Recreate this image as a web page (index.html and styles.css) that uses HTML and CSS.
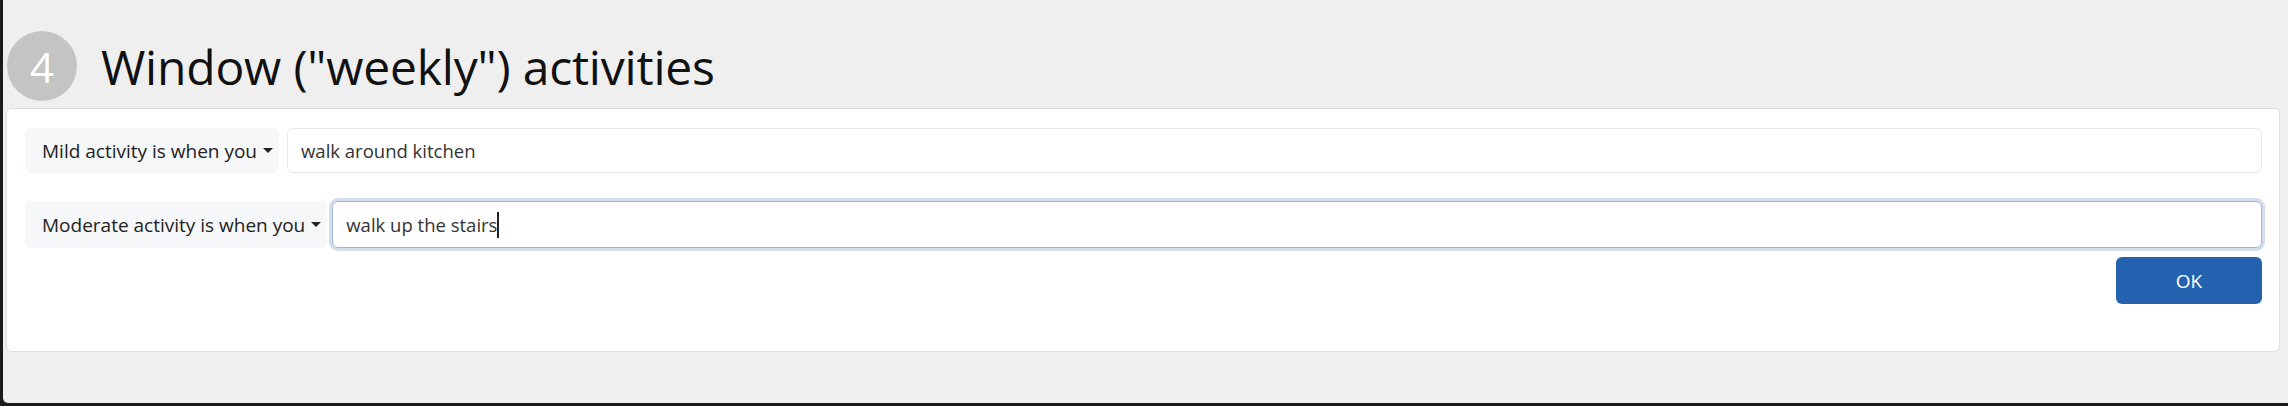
FILE: index.html
```html
<!DOCTYPE html>
<html lang="en">
<head>
<meta charset="utf-8">
<title>Window activities</title>
<link rel="stylesheet" href="styles.css">
</head>
<body>
<div class="page">
  <header class="heading">
    <div class="step">4</div>
    <h1 class="title">Window ("weekly") activities</h1>
  </header>
  <section class="card">
    <div class="row">
      <div class="label">Mild activity is when you <span class="caret"></span></div>
      <div class="field">walk around kitchen</div>
    </div>
    <div class="row row-focus">
      <div class="label">Moderate activity is when you <span class="caret"></span></div>
      <div class="field focused">walk up the stairs<span class="cursor"></span></div>
    </div>
    <div class="actions">
      <button class="btn">OK</button>
    </div>
  </section>
</div>
</body>
</html>
```
FILE: styles.css
```css
html, body {
  margin: 0;
  padding: 0;
  background: #1b1b1b;
}
body {
  font-family: "Open Sans", "Noto Sans", sans-serif;
  color: #212529;
}
.page {
  margin-left: 3px;
  height: 403px;
  background: #efefef;
  border-bottom-left-radius: 5px;
  padding: 32px 8px 0 3px;
  box-sizing: border-box;
}
.heading {
  display: flex;
  align-items: center;
  gap: 24px;
  height: 68px;
  padding-left: 1px;
}
.step {
  width: 70px;
  height: 70px;
  border-radius: 50%;
  background: #c4c4c4;
  color: #fff;
  font-size: 42px;
  font-weight: 400;
  display: flex;
  align-items: center;
  justify-content: center;
  flex-shrink: 0;
}
.title {
  margin: 0;
  font-size: 48px;
  font-weight: 400;
  color: #111;
  letter-spacing: -0.2px;
}
.card {
  margin-top: 8px;
  background: #fff;
  border: 1px solid #dedede;
  border-radius: 6px;
  height: 244px;
  box-sizing: border-box;
  padding: 19px 17px 0 18px;
  display: flex;
  flex-direction: column;
}
.row {
  display: flex;
  gap: 8px;
  height: 45px;
  margin-bottom: 28px;
}
.row-focus {
  gap: 5px;
  margin-bottom: 9px;
  height: 47px;
}
.label {
  background: #f6f7f8;
  border-radius: 6px;
  display: flex;
  align-items: center;
  padding: 0 6px 0 17px;
  font-size: 19px;
  color: #222;
  white-space: nowrap;
}
.caret {
  display: inline-block;
  width: 0;
  height: 0;
  margin-left: 6px;
  border-left: 5px solid transparent;
  border-right: 5px solid transparent;
  border-top: 5px solid #222;
}
.field {
  flex: 1;
  border: 1px solid #e5e7ea;
  border-radius: 6px;
  display: flex;
  align-items: center;
  padding: 0 13px;
  font-size: 18.5px;
  color: #333;
}
.field.focused {
  border-color: #9db5db;
  box-shadow: 0 0 0 3px #d3ddec;
}
.cursor {
  display: inline-block;
  width: 1.5px;
  height: 26px;
  background: #222;
}
.actions {
  display: flex;
  justify-content: flex-end;
}
.btn {
  width: 146px;
  height: 47px;
  border: 0;
  border-radius: 6px;
  background: #2462b0;
  color: #fff;
  font-family: inherit;
  font-size: 19px;
}
```
